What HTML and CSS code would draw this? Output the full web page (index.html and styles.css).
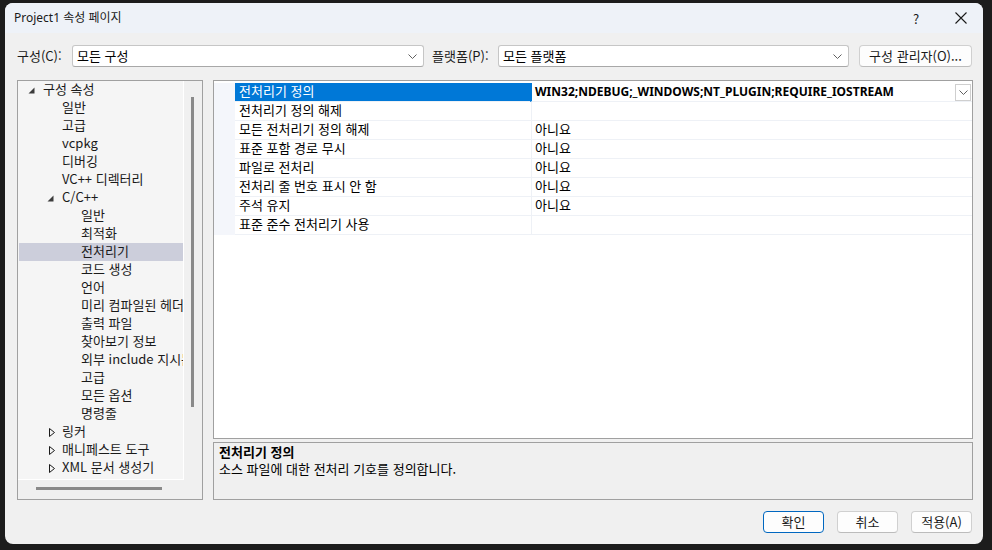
FILE: index.html
```html
<!DOCTYPE html>
<html lang="ko">
<head>
<meta charset="utf-8">
<title>Project1 속성 페이지</title>
<link rel="stylesheet" href="styles.css">
</head>
<body>
<div class="window">
  <div class="titlebar">
    <span class="title">Project1 속성 페이지</span>
    <div class="title-controls">
      <span class="help">?</span>
      <svg class="close" width="12" height="12" viewBox="0 0 12 12"><path d="M0.5 0.5 L11.5 11.5 M11.5 0.5 L0.5 11.5" stroke="#1a1a1a" stroke-width="1.1" fill="none"/></svg>
    </div>
  </div>
  <div class="content">
    <div class="toprow">
      <span class="lbl lbl-config">구성(C):</span>
      <div class="combo combo-config"><span>모든 구성</span><svg class="chev" width="9" height="5" viewBox="0 0 9 5"><path d="M0.5 0.5 L4.5 4.5 L8.5 0.5" stroke="#606060" fill="none"/></svg></div>
      <span class="lbl lbl-platform">플랫폼(P):</span>
      <div class="combo combo-platform"><span>모든 플랫폼</span><svg class="chev" width="9" height="5" viewBox="0 0 9 5"><path d="M0.5 0.5 L4.5 4.5 L8.5 0.5" stroke="#606060" fill="none"/></svg></div>
      <button class="btn btn-manager">구성 관리자(O)...</button>
    </div>
    <div class="main">
      <div class="tree">
        <div class="tree-items">
          <div class="node l0"><span class="exp"><svg width="7" height="7" viewBox="0 0 7 7"><polygon points="6.5,0.5 6.5,6.5 0.5,6.5" fill="#3c3c3c"/></svg></span><span class="txt">구성 속성</span></div>
          <div class="node l1"><span class="exp"></span><span class="txt">일반</span></div>
          <div class="node l1"><span class="exp"></span><span class="txt">고급</span></div>
          <div class="node l1"><span class="exp"></span><span class="txt">vcpkg</span></div>
          <div class="node l1"><span class="exp"></span><span class="txt">디버깅</span></div>
          <div class="node l1"><span class="exp"></span><span class="txt">VC++ 디렉터리</span></div>
          <div class="node l1"><span class="exp"><svg width="7" height="7" viewBox="0 0 7 7"><polygon points="6.5,0.5 6.5,6.5 0.5,6.5" fill="#3c3c3c"/></svg></span><span class="txt">C/C++</span></div>
          <div class="node l2"><span class="exp"></span><span class="txt">일반</span></div>
          <div class="node l2"><span class="exp"></span><span class="txt">최적화</span></div>
          <div class="node l2 selected"><span class="exp"></span><span class="txt">전처리기</span></div>
          <div class="node l2"><span class="exp"></span><span class="txt">코드 생성</span></div>
          <div class="node l2"><span class="exp"></span><span class="txt">언어</span></div>
          <div class="node l2"><span class="exp"></span><span class="txt">미리 컴파일된 헤더</span></div>
          <div class="node l2"><span class="exp"></span><span class="txt">출력 파일</span></div>
          <div class="node l2"><span class="exp"></span><span class="txt">찾아보기 정보</span></div>
          <div class="node l2"><span class="exp"></span><span class="txt">외부 include 지시문</span></div>
          <div class="node l2"><span class="exp"></span><span class="txt">고급</span></div>
          <div class="node l2"><span class="exp"></span><span class="txt">모든 옵션</span></div>
          <div class="node l2"><span class="exp"></span><span class="txt">명령줄</span></div>
          <div class="node l1"><span class="exp collapsed"><svg width="6" height="9" viewBox="0 0 6 9"><polygon points="0.5,0.5 5.5,4.5 0.5,8.5" fill="none" stroke="#1a1a1a"/></svg></span><span class="txt">링커</span></div>
          <div class="node l1"><span class="exp collapsed"><svg width="6" height="9" viewBox="0 0 6 9"><polygon points="0.5,0.5 5.5,4.5 0.5,8.5" fill="none" stroke="#1a1a1a"/></svg></span><span class="txt">매니페스트 도구</span></div>
          <div class="node l1"><span class="exp collapsed"><svg width="6" height="9" viewBox="0 0 6 9"><polygon points="0.5,0.5 5.5,4.5 0.5,8.5" fill="none" stroke="#1a1a1a"/></svg></span><span class="txt">XML 문서 생성기</span></div>
        </div>
        <div class="vscroll"><div class="vthumb"></div></div>
        <div class="hscroll"><div class="hthumb"></div></div>
        <div class="corner"></div>
      </div>
      <div class="right">
        <div class="grid">
          <div class="prop selected">
            <div class="gut"></div>
            <div class="pname">전처리기 정의</div>
            <div class="pval"><span class="vbold">WIN32;NDEBUG;_WINDOWS;NT_PLUGIN;REQUIRE_IOSTREAM</span><span class="dd"><svg width="9" height="5" viewBox="0 0 9 5"><path d="M0.5 0.5 L4.5 4.5 L8.5 0.5" stroke="#606060" fill="none"/></svg></span></div>
          </div>
          <div class="prop"><div class="gut"></div><div class="pname">전처리기 정의 해제</div><div class="pval"></div></div>
          <div class="prop"><div class="gut"></div><div class="pname">모든 전처리기 정의 해제</div><div class="pval">아니요</div></div>
          <div class="prop"><div class="gut"></div><div class="pname">표준 포함 경로 무시</div><div class="pval">아니요</div></div>
          <div class="prop"><div class="gut"></div><div class="pname">파일로 전처리</div><div class="pval">아니요</div></div>
          <div class="prop"><div class="gut"></div><div class="pname">전처리 줄 번호 표시 안 함</div><div class="pval">아니요</div></div>
          <div class="prop"><div class="gut"></div><div class="pname">주석 유지</div><div class="pval">아니요</div></div>
          <div class="prop"><div class="gut"></div><div class="pname">표준 준수 전처리기 사용</div><div class="pval"></div></div>
        </div>
        <div class="desc">
          <div class="desc-title">전처리기 정의</div>
          <div class="desc-text">소스 파일에 대한 전처리 기호를 정의합니다.</div>
        </div>
      </div>
    </div>
    <div class="buttons">
      <button class="btn btn-ok">확인</button>
      <button class="btn">취소</button>
      <button class="btn">적용(A)</button>
    </div>
  </div>
</div>
</body>
</html>
```
FILE: styles.css
```css
* { box-sizing: border-box; }
html, body { margin: 0; padding: 0; }
body {
  background: #1c1c1c;
  width: 992px;
  height: 550px;
  overflow: hidden;
  font-family: "Noto Sans CJK KR", "Noto Sans", sans-serif;
  font-size: 13px;
  color: #000;
}
.window {
  margin: 3px 0 0 5px;
  width: 978px;
  height: 541px;
  background: #f0f0f0;
  border-radius: 8px;
  overflow: hidden;
  display: flex;
  flex-direction: column;
}
.titlebar {
  height: 30px;
  background: #eef2f8;
  display: flex;
  align-items: center;
  justify-content: space-between;
  padding-left: 9px;
  flex: none;
}
.title {
  font-family: "Noto Sans", "Noto Sans CJK KR", sans-serif;
  font-size: 12px;
  color: #1a1a1a;
  line-height: 16px;
  padding-bottom: 1px;
}
.title-controls { display: flex; align-items: center; height: 30px; }
.help { font-size: 13px; width: 20px; text-align: center; margin-right: 29px; color: #1a1a1a; }
.close { margin-right: 16px; }

.content {
  flex: 1;
  display: flex;
  flex-direction: column;
  padding: 12px 10px 0 12px;
}
.toprow {
  display: flex;
  align-items: center;
  height: 22px;
  flex: none;
}
.lbl { line-height: 16px; color: #1a1a1a; white-space: nowrap; padding-bottom: 1px; }
.lbl-config { width: 55px; }
.lbl-platform { width: 66px; margin-left: 8px; }
.combo {
  height: 22px;
  background: #fff;
  border: 1px solid #c6c6c6;
  border-bottom-color: #a8a8a8;
  border-radius: 3px;
  display: flex;
  align-items: center;
  justify-content: space-between;
  padding: 0 6px 1px 4px;
  line-height: 16px;
}
.combo .chev { margin-top: 1px; }
.combo-config { width: 352px; }
.combo-platform { width: 351px; }
.btn {
  font-family: inherit;
  font-size: inherit;
  color: #1a1a1a;
  background: #fdfdfd;
  border: 1px solid #d0d0d0;
  border-bottom-color: #bcbcbc;
  border-radius: 4px;
  height: 22px;
  padding: 0 0 1px;
  line-height: 16px;
}
.btn-manager { width: 113px; margin-left: 10px; }

.main {
  display: flex;
  gap: 10px;
  margin-top: 13px;
  height: 420px;
  flex: none;
}
.tree {
  width: 186px;
  height: 420px;
  border: 1px solid #a0a0a0;
  display: grid;
  grid-template-columns: 166px 18px;
  grid-template-rows: 399px 19px;
  background: #f0f0f0;
}
.tree-items {
  background: #f5f5f5;
  border-right: 1px solid #ffffff;
  border-bottom: 1px solid #ffffff;
  overflow-x: clip;
  overflow-y: visible;
  padding-left: 1px;
}
.node {
  height: 18px;
  display: flex;
  align-items: center;
  white-space: nowrap;
  color: #1a1a1a;
}
.node .txt { line-height: 16px; padding-bottom: 2px; }
.node.selected { background: #cccedb; }
.l0 { padding-left: 9px; }
.l1 { padding-left: 28px; }
.l2 { padding-left: 47px; }
.exp { width: 15px; flex: none; display: flex; align-items: center; height: 18px; padding-top: 1px; }
.exp.collapsed { padding-left: 2px; }
.vscroll { position: relative; }
.vthumb {
  position: absolute;
  left: 7px;
  top: 16px;
  width: 3px;
  height: 310px;
  background: #8a8a8a;
}
.hscroll { position: relative; }
.hthumb {
  position: absolute;
  left: 18px;
  top: 7px;
  width: 126px;
  height: 3px;
  background: #8a8a8a;
}

.right {
  width: 760px;
  display: flex;
  flex-direction: column;
  gap: 3px;
}
.grid {
  height: 359px;
  background: #fff;
  border: 1px solid #a0a0a0;
  padding-top: 2px;
}
.prop {
  display: grid;
  grid-template-columns: 21px 297px 1fr;
  height: 19px;
}
.gut { background: #f4f6fb; }
.pname, .pval {
  height: 19px;
  line-height: 16px;
  border-bottom: 1px solid #eef1f6;
  white-space: nowrap;
}
.pname { padding-left: 4px; border-right: 1px solid #eef1f6; }
.pval { padding-left: 3px; }
.prop.selected .pname { background: #0078d7; color: #fff; }
.prop.selected .pval {
  border-left: 2px solid #0078d7;
  margin-left: -2px;
  display: flex;
  justify-content: space-between;
  align-items: flex-start;
  padding-right: 1px;
}
.vbold {
  font-family: "Noto Sans", "Noto Sans CJK KR", sans-serif;
  font-size: 12px;
  font-weight: bold;
  line-height: 17px;
}
.dd {
  width: 16px;
  height: 17px;
  margin-top: 1px;
  border: 1px solid #cfcfcf;
  background: #fff;
  display: flex;
  align-items: center;
  justify-content: center;
}
.desc {
  height: 58px;
  border: 1px solid #a0a0a0;
  background: #f0f0f0;
  padding: 0 0 0 5px;
}
.desc-title { font-weight: bold; line-height: 17px; }
.desc-text { line-height: 17px; }

.buttons {
  display: flex;
  justify-content: flex-end;
  gap: 13px;
  margin-top: 11px;
  padding-right: 1px;
}
.buttons .btn { width: 61px; }
.btn-ok { border-color: #0067c0; }
```
